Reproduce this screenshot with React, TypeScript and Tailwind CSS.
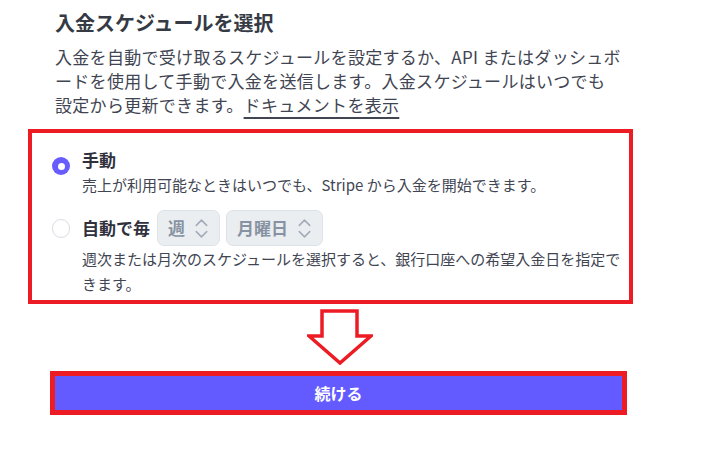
import { ChevronsUpDown } from "lucide-react";

const jp = { fontFamily: '"Noto Sans CJK JP", "Noto Sans", sans-serif' };

export default function App() {
  return (
    <div className="relative h-[468px] w-[710px] overflow-hidden bg-white" style={jp}>
      <div className="pl-[55px] pt-[9px]">
        <h1 className="text-[20px] font-bold leading-[28px] text-[#353a44]">入金スケジュールを選択</h1>
        <p className="mt-[8px] whitespace-nowrap text-[17px] leading-[24px] tracking-[0.3px] text-[#414552]">
          入金を自動で受け取るスケジュールを設定するか、API またはダッシュボ
          <br />
          ードを使用して手動で入金を送信します。入金スケジュールはいつでも
          <br />
          設定から更新できます。<a className="underline decoration-[1.5px] underline-offset-[5px]">ドキュメントを表示</a>
        </p>
      </div>

      <div className="ml-[28px] mt-[12px] w-[605px] border-4 border-[#ed1c24] pb-[4px] pl-[20px] pt-[15px]">
        <Option
          checked
          label={<span>手動</span>}
          desc="売上が利用可能なときはいつでも、Stripe から入金を開始できます。"
        />
        <div className="mt-[13px]">
          <Option
            label={
              <span className="flex items-center gap-[6px]">
                <span className="mr-[1px]">自動で毎</span>
                <Select value="週" />
                <Select value="月曜日" />
              </span>
            }
            desc="週次または月次のスケジュールを選択すると、銀行口座への希望入金日を指定できます。"
          />
        </div>
      </div>

      <svg className="ml-[307px] mt-[5px] block" width="66" height="56" viewBox="0 0 66 56">
        <polygon
          points="15,2 50,2 50,27 64,27 33,54 2,27 15,27"
          fill="white"
          stroke="#ed1c24"
          strokeWidth="3.5"
          strokeLinejoin="miter"
        />
      </svg>

      <div className="ml-[50px] mt-[6px] w-[577px] border-[5px] border-[#ed1c24] bg-[#635bff]">
        <div className="flex h-[34px] items-center justify-center text-[16px] font-bold text-white">続ける</div>
      </div>
    </div>
  );
}

function Option({ checked, label, desc }: { checked?: boolean; label: React.ReactNode; desc: string }) {
  return (
    <div className="flex gap-[12px]">
      <div className="flex h-[36px] w-[18px] shrink-0 items-center">
        {checked ? (
          <span className="flex h-[18px] w-[18px] items-center justify-center rounded-full bg-[#675dff]">
            <span className="h-[7px] w-[7px] rounded-full bg-white" />
          </span>
        ) : (
          <span className="h-[19px] w-[19px] rounded-full border-[1.5px] border-[#d8dee4] bg-white" />
        )}
      </div>
      <div className="flex-1">
        <div className="flex min-h-[24px] items-center text-[17px] font-bold leading-[24px] text-[#30313d]">{label}</div>
        <p className="pr-[4px] text-[15px] leading-[25px] text-[#414552]">{desc}</p>
      </div>
    </div>
  );
}

function Select({ value }: { value: string }) {
  return (
    <span className="flex h-[36px] items-center gap-[4px] rounded-[7px] border border-[#dde2e7] bg-[#ebeef1] pl-[10px] pr-[5px] text-[17px] font-bold text-[#8792a2]">
      {value}
      <ChevronsUpDown size={25} strokeWidth={1.5} className="text-[#a3acba]" />
    </span>
  );
}
